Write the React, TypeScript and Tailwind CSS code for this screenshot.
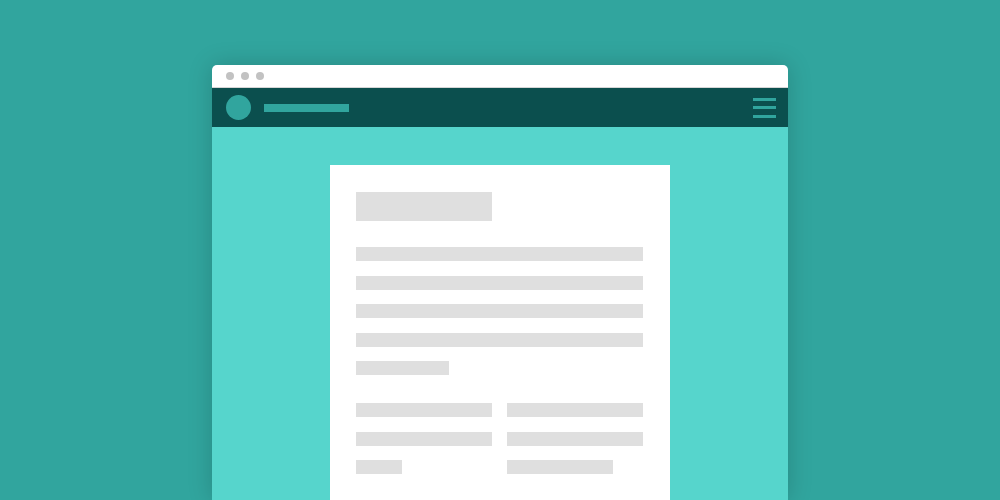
import React from "react";

const Bar = ({ w, h = 14, className = "" }: { w: number; h?: number; className?: string }) => (
  <div className={"bg-[#dfdfdf] " + className} style={{ width: w, height: h }} />
);

export default function App() {
  return (
    <div className="w-[1000px] h-[500px] overflow-hidden bg-[#31a59e] pt-[65px] flex justify-center">
      <div className="w-[576px] h-[435px] flex flex-col rounded-t-[5px] overflow-hidden shadow-[0_0_24px_rgba(0,0,0,0.18)]">
        <div className="h-[23px] bg-white flex items-center pl-[14px] gap-[7px] border-b border-[#d6d6d6] shrink-0">
          <span className="w-[8px] h-[8px] rounded-full bg-[#c2c2c2]" />
          <span className="w-[8px] h-[8px] rounded-full bg-[#c2c2c2]" />
          <span className="w-[8px] h-[8px] rounded-full bg-[#c2c2c2]" />
        </div>
        <div className="h-[39px] bg-[#0b4f4e] flex items-center pl-[14px] pr-[12px] shrink-0">
          <div className="w-[25px] h-[25px] rounded-full bg-[#31a59e]" />
          <div className="ml-[13px] w-[85px] h-[8px] bg-[#31a59e]" />
          <div className="ml-auto flex flex-col gap-[5.5px]">
            <div className="w-[23px] h-[3px] bg-[#31a59e]" />
            <div className="w-[23px] h-[3px] bg-[#31a59e]" />
            <div className="w-[23px] h-[3px] bg-[#31a59e]" />
          </div>
        </div>
        <div className="flex-1 bg-[#56d5cc] flex justify-center pt-[38px]">
          <div className="w-[340px] bg-white pt-[27px] px-[26px] flex flex-col">
            <Bar w={136} h={29} />
            <div className="mt-[26px] flex flex-col gap-[14.5px]">
              <Bar w={287} />
              <Bar w={287} />
              <Bar w={287} />
              <Bar w={287} />
              <Bar w={93} />
            </div>
            <div className="mt-[28px] flex gap-[15px]">
              <div className="flex flex-col gap-[14.5px]">
                <Bar w={136} />
                <Bar w={136} />
                <Bar w={46} />
              </div>
              <div className="flex flex-col gap-[14.5px]">
                <Bar w={136} />
                <Bar w={136} />
                <Bar w={106} />
              </div>
            </div>
          </div>
        </div>
      </div>
    </div>
  );
}
